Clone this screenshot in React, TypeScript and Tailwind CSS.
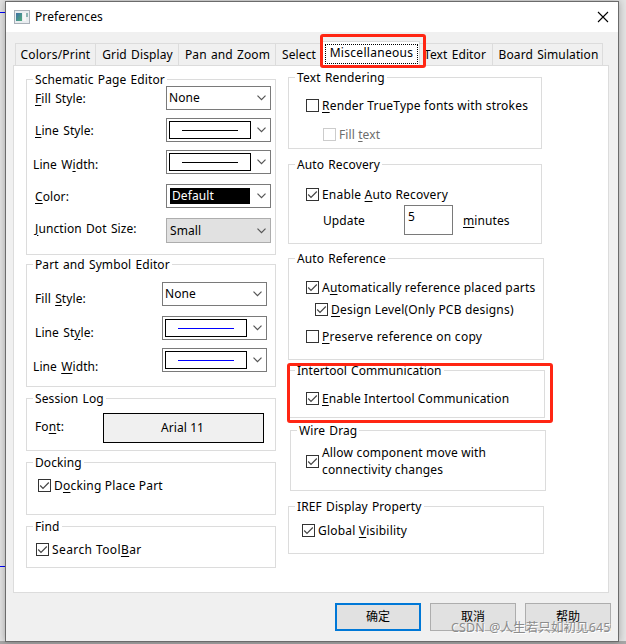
import { useState } from "react";
import type { ReactNode } from "react";

type GroupProps = {
  title: string;
  titleClass?: string;
  className: string;
  children: ReactNode;
};

const Group = ({ title, titleClass = "", className, children }: GroupProps) => (
  <section className={`flex shrink-0 flex-col border border-[#dcdcdc] ${className}`}>
    <div className="flex h-0 items-center pl-1.5">
      <h2 className={`-mt-px bg-white px-0.5 ${titleClass}`}>{title}</h2>
    </div>
    {children}
  </section>
);

const Chevron = () => (
  <svg width="9" height="6" viewBox="0 0 9 6" fill="none" className="shrink-0">
    <path d="M0.5 0.7 L4.5 4.7 L8.5 0.7" stroke="#555" strokeWidth="1.2" />
  </svg>
);

type SelectProps = {
  children: ReactNode;
  className?: string;
};

const Select = ({
  children,
  className = "h-6 border-[#7a7a7a] bg-white",
}: SelectProps) => (
  <button
    className={`flex w-[105px] shrink-0 items-center justify-between border pr-1 pl-0.5 text-left ${className}`}
  >
    {children}
    <Chevron />
  </button>
);

const LineSwatch = ({ color = "bg-black" }: { color?: string }) => (
  <span className="flex h-[18px] w-[82px] items-center border border-black pt-px pl-3">
    <span className={`h-px w-14 ${color}`} />
  </span>
);

type CheckProps = {
  label: ReactNode;
  initial?: boolean;
  disabled?: boolean;
  className: string;
  textClass?: string;
};

const Check = ({
  label,
  initial = false,
  disabled = false,
  className,
  textClass = "tracking-[0.2px]",
}: CheckProps) => {
  const [checked, setChecked] = useState<boolean>(initial);

  return (
    <button
      disabled={disabled}
      onClick={() => setChecked((prev) => !prev)}
      className={`flex h-[13px] shrink-0 items-center gap-[3px] text-left ${className}`}
    >
      <span
        className={`flex size-[13px] shrink-0 items-center justify-center border bg-white ${
          disabled ? "border-[#ccc]" : "border-[#333]"
        }`}
      >
        {checked && (
          <svg width="11" height="11" viewBox="0 0 11 11" fill="none">
            <path d="M1.2 5.5 L4 8.3 L9.8 2.5" stroke="#444" strokeWidth="1.2" />
          </svg>
        )}
      </span>
      <span className={textClass}>{label}</span>
    </button>
  );
};

const Key = ({ children }: { children: string }) => (
  <span className="underline decoration-1 underline-offset-2">{children}</span>
);

const tab = "flex h-[22px] items-center justify-center border-t border-r border-[#dcdcdc] pt-px";

const App = () => {
  const [minutes, setMinutes] = useState<string>("5");

  return (
    <div className="relative h-[644px] w-[626px] overflow-hidden bg-[#e4e4e4] pt-px pl-[5px] font-['Noto_Sans','Noto_Sans_CJK_SC',sans-serif] text-[12px] leading-4 tracking-[0.1px] whitespace-nowrap text-black [word-spacing:1px]">
      {/* Canvas behind the dialog */}
      <div className="absolute top-3 left-0 h-px w-[5px] bg-[#0000ff]" />
      <div className="absolute top-[566px] left-0 h-px w-[5px] bg-[#0000ff]" />
      <div className="absolute bottom-0 left-0 h-[3px] w-full bg-[#a8a8a8]" />

      <div className="relative flex h-[641px] w-[614px] flex-col border border-[#6b6b6b] bg-[#f0f0f0] shadow-[0_0_8px_rgba(0,0,0,0.3)]">
        {/* Title bar */}
        <header className="flex h-[30px] shrink-0 items-center bg-white pr-[9px] pl-2">
          <svg width="16" height="14" viewBox="0 0 16 14" className="mr-[5px]">
            <defs>
              <linearGradient id="pane" x1="0" y1="0" x2="1" y2="1">
                <stop offset="0" stopColor="#3f6fa5" />
                <stop offset="1" stopColor="#4fae7c" />
              </linearGradient>
            </defs>
            <rect x="0.5" y="0.5" width="15" height="13" fill="#e9edf0" stroke="#a9b0b8" />
            <rect x="2" y="3" width="6" height="8" fill="url(#pane)" />
            <rect x="9" y="3" width="3" height="8" fill="#f6f6f6" />
            <rect x="12" y="3" width="2" height="4" fill="#8fb6b4" />
          </svg>
          <h1 className="flex-1">Preferences</h1>
          <svg width="12" height="12" viewBox="0 0 12 12" fill="none">
            <path d="M1 1 L11 11 M11 1 L1 11" stroke="#000" strokeWidth="1.1" />
          </svg>
        </header>

        {/* Tabs */}
        <nav className="mt-[11px] ml-[9px] flex h-[22px] shrink-0">
          <div className={`${tab} w-[81px] border-l tracking-[0.2px]`}>Colors/Print</div>
          <div className={`${tab} w-[83px] pl-px`}>Grid Display</div>
          <div className={`${tab} w-[97px] pl-px`}>Pan and Zoom</div>
          <div className={`${tab} w-[47px]`}>Select</div>
          <div className="relative z-10 -mt-0.5 h-[25px] w-[97px] border-t border-r border-[#dcdcdc] bg-white pt-0.5 pl-0.5">
            <div className="flex h-5 w-[93px] items-center justify-center border border-dotted border-black pb-0.5 tracking-[0.3px]">
              Miscellaneous
            </div>
            <div className="absolute -top-[8px] -left-[3px] h-[34px] w-[106px] rounded-[3px] border-3 border-[#ff2613]" />
          </div>
          <div className={`${tab} w-[73px] pr-0.5`}>Text Editor</div>
          <div className={`${tab} w-[110px] pl-0.5`}>Board Simulation</div>
        </nav>

        {/* Page */}
        <main className="ml-[7px] flex h-[528px] w-[596px] shrink-0 gap-3 border border-[#dcdcdc] bg-white pl-3">
          <div className="flex w-[250px] flex-col pt-[13px]">
            <Group title="Schematic Page Editor" className="h-[176px]">
              <div className="mt-1.5 flex h-6 items-center justify-between pr-1 pl-2">
                <span className="pt-0.5">
                  <Key>F</Key>ill Style:
                </span>
                <Select>None</Select>
              </div>
              <div className="mt-2 flex h-6 items-center justify-between pr-1 pl-2">
                <span className="pt-0.5">
                  <Key>L</Key>ine Style:
                </span>
                <Select>
                  <LineSwatch />
                </Select>
              </div>
              <div className="mt-2 flex h-6 items-center justify-between pr-1 pl-1.5">
                <span className="pt-1.5">
                  Line W<Key>i</Key>dth:
                </span>
                <Select>
                  <LineSwatch />
                </Select>
              </div>
              <div className="mt-2.5 flex h-6 items-center justify-between pr-1 pl-2">
                <span className="pt-0.5">
                  <Key>C</Key>olor:
                </span>
                <Select>
                  <span className="ml-px h-4 w-20 bg-black pl-0.5 text-white">Default</span>
                </Select>
              </div>
              <div className="mt-2.5 flex h-[25px] items-center justify-between pr-1 pl-2">
                <span className="pb-1">
                  <Key>J</Key>unction Dot Size:
                </span>
                <Select className="h-[25px] border-[#adadad] bg-[#e1e1e1]">
                  <span className="pl-px">Small</span>
                </Select>
              </div>
            </Group>

            <Group title="Part and Symbol Editor" className="mt-[9px] h-[123px]">
              <div className="mt-[17px] flex h-6 items-center justify-between pr-2 pl-2">
                <span className="pt-2.5">
                  Fill <Key>S</Key>tyle:
                </span>
                <Select>None</Select>
              </div>
              <div className="mt-2.5 flex h-6 items-center justify-between pr-2 pl-2">
                <span className="pt-2.5">
                  Line St<Key>y</Key>le:
                </span>
                <Select>
                  <LineSwatch color="bg-[#0000ff]" />
                </Select>
              </div>
              <div className="mt-2 flex h-6 items-center justify-between pr-2 pl-1.5">
                <span className="pt-3.5">
                  Line <Key>W</Key>idth:
                </span>
                <Select>
                  <LineSwatch color="bg-[#0000ff]" />
                </Select>
              </div>
            </Group>

            <Group title="Session Log" className="mt-[11px] h-[53px]">
              <div className="mt-3.5 flex h-[30px] items-center justify-between pr-[11px] pl-2">
                <span className="pb-0.5">
                  Fo<Key>n</Key>t:
                </span>
                <button className="h-[30px] w-[161px] border border-black bg-[#f0f0f0] pr-0.5">
                  Arial 11
                </button>
              </div>
            </Group>

            <Group title="Docking" className="mt-[11px] h-[53px]">
              <Check
                initial
                className="mt-4 ml-[11px]"
                label={<>D<Key>o</Key>cking Place Part</>}
              />
            </Group>

            <Group title="Find" className="mt-[11px] h-[42px]">
              <Check
                initial
                className="mt-4 ml-[9px]"
                textClass="tracking-[0.4px]"
                label={<>Search Tool<Key>B</Key>ar</>}
              />
            </Group>
          </div>

          <div className="flex flex-col items-start pt-[11px]">
            <Group title="Text Rendering" titleClass="tracking-[0.15px]" className="h-[72px] w-[254px]">
              <Check
                className="mt-[21px] ml-[17px]"
                label={<><Key>R</Key>ender TrueType fonts with strokes</>}
              />
              <Check
                disabled
                className="mt-4 ml-[34px]"
                textClass="text-[#6d6d6d]"
                label={<>Fill <Key>t</Key>ext</>}
              />
            </Group>

            <Group title="Auto Recovery" className="mt-[15px] h-20 w-[254px]">
              <Check
                initial
                className="mt-[23px] ml-[17px]"
                label={<>Enable <Key>A</Key>uto Recovery</>}
              />
              <div className="mt-1 flex h-[30px] items-center pl-[34px]">
                <span className="w-[81px] pt-0.5">Update</span>
                <input
                  value={minutes}
                  onChange={(e) => setMinutes(e.target.value)}
                  className="h-[30px] w-[49px] border border-[#7a7a7a] bg-white pb-2 pl-[3px] outline-none"
                />
                <span className="ml-2.5 pt-0.5">
                  <Key>m</Key>inutes
                </span>
              </div>
            </Group>

            <Group title="Auto Reference" className="mt-3.5 h-[102px] w-64">
              <Check
                initial
                className="mt-[22px] ml-[17px]"
                label={<>A<Key>u</Key>tomatically reference placed parts</>}
              />
              <Check
                initial
                className="mt-[9px] ml-[26px]"
                label={<><Key>D</Key>esign Level(Only PCB designs)</>}
              />
              <Check
                className="mt-3.5 ml-[17px]"
                textClass="tracking-[0.27px]"
                label={<><Key>P</Key>reserve reference on copy</>}
              />
            </Group>

            <div className="relative mt-2.5">
              <Group
                title="Intertool Communication"
                titleClass="tracking-[0.05px]"
                className="h-12 w-[257px]"
              >
                <Check
                  initial
                  className="mt-[21px] ml-[17px]"
                  textClass="tracking-[0.12px]"
                  label={<><Key>E</Key>nable Intertool Communication</>}
                />
              </Group>
              <div className="pointer-events-none absolute -top-[7px] -left-px h-[60px] w-[266px] rounded-[3px] border-3 border-[#ff2613]" />
            </div>

            <Group title="Wire Drag" className="mt-3 ml-0.5 h-[61px] w-64">
              <Check
                initial
                className="mt-6 ml-[15px]"
                textClass="pb-0.5 leading-[17px] tracking-[0.17px]"
                label={
                  <>
                    Allow component move with
                    <br />
                    connectivity chan<Key>g</Key>es
                  </>
                }
              />
            </Group>

            <Group title="IREF Display Property" className="mt-[15px] h-12 w-64">
              <Check
                initial
                className="mt-[17px] ml-[13px]"
                label={<>Global <Key>V</Key>isibility</>}
              />
            </Group>
          </div>
        </main>

        {/* Dialog buttons */}
        <footer className="mt-2.5 flex justify-end gap-[9px] pr-[7px]">
          <button className="h-7 w-[86px] border-2 border-[#0078d7] bg-[#e1e1e1]">确定</button>
          <button className="h-7 w-[86px] border border-[#adadad] bg-[#e1e1e1]">取消</button>
          <button className="h-7 w-[86px] border border-[#adadad] bg-[#e1e1e1]">帮助</button>
        </footer>
      </div>

      <span className="absolute top-[620px] left-[451px] text-[12.5px] text-[#8c8c8c] [text-shadow:1px_1px_0_#fff]">
        CSDN @人生若只如初见645
      </span>
    </div>
  );
};

export default App;
